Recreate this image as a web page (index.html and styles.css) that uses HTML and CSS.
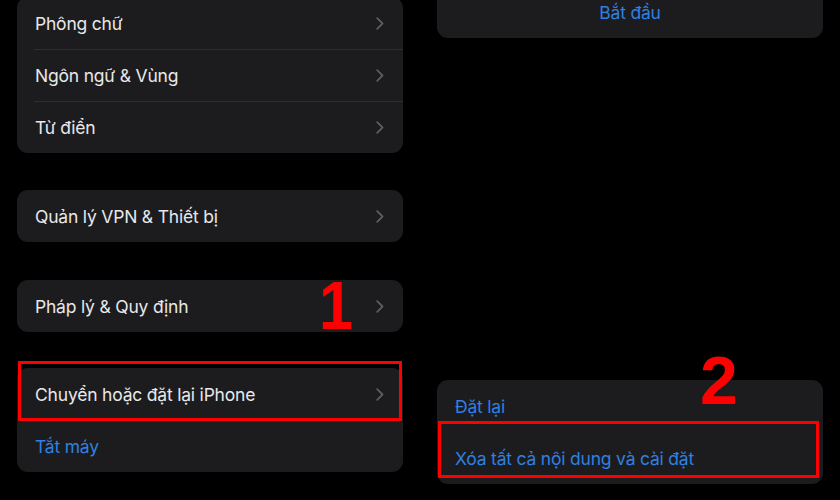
FILE: index.html
```html
<!DOCTYPE html>
<html lang="vi">
<head>
<meta charset="utf-8">
<link rel="stylesheet" href="styles.css">
</head>
<body>
<div class="page">
  <div class="col col-left">
    <div class="card card-top-left">
      <div class="row"><span class="label">Phông chữ</span><span class="chev"><svg viewBox="0 0 8 13" width="8" height="13"><path d="M1.2 1.2 L6.5 6.5 L1.2 11.8" fill="none" stroke="currentColor" stroke-width="1.8" stroke-linecap="round" stroke-linejoin="round"/></svg></span></div>
      <div class="row"><span class="label">Ngôn ngữ &amp; Vùng</span><span class="chev"><svg viewBox="0 0 8 13" width="8" height="13"><path d="M1.2 1.2 L6.5 6.5 L1.2 11.8" fill="none" stroke="currentColor" stroke-width="1.8" stroke-linecap="round" stroke-linejoin="round"/></svg></span></div>
      <div class="row"><span class="label">Từ điển</span><span class="chev"><svg viewBox="0 0 8 13" width="8" height="13"><path d="M1.2 1.2 L6.5 6.5 L1.2 11.8" fill="none" stroke="currentColor" stroke-width="1.8" stroke-linecap="round" stroke-linejoin="round"/></svg></span></div>
    </div>
    <div class="card card-vpn">
      <div class="row"><span class="label">Quản lý VPN &amp; Thiết bị</span><span class="chev"><svg viewBox="0 0 8 13" width="8" height="13"><path d="M1.2 1.2 L6.5 6.5 L1.2 11.8" fill="none" stroke="currentColor" stroke-width="1.8" stroke-linecap="round" stroke-linejoin="round"/></svg></span></div>
    </div>
    <div class="card card-legal">
      <div class="row"><span class="label">Pháp lý &amp; Quy định</span><span class="chev"><svg viewBox="0 0 8 13" width="8" height="13"><path d="M1.2 1.2 L6.5 6.5 L1.2 11.8" fill="none" stroke="currentColor" stroke-width="1.8" stroke-linecap="round" stroke-linejoin="round"/></svg></span></div>
      <span class="step step-1">1</span>
    </div>
    <div class="card card-reset">
      <div class="row marked mark-left"><span class="label">Chuyển hoặc đặt lại iPhone</span><span class="chev"><svg viewBox="0 0 8 13" width="8" height="13"><path d="M1.2 1.2 L6.5 6.5 L1.2 11.8" fill="none" stroke="currentColor" stroke-width="1.8" stroke-linecap="round" stroke-linejoin="round"/></svg></span></div>
      <div class="row"><span class="label blue">Tắt máy</span></div>
    </div>
  </div>
  <div class="col col-right">
    <div class="card card-top-right">
      <div class="row center"><span class="label blue">Bắt đầu</span></div>
    </div>
    <div class="card card-erase">
      <div class="row"><span class="label blue">Đặt lại</span></div>
      <div class="row marked mark-right"><span class="label blue">Xóa tất cả nội dung và cài đặt</span></div>
      <span class="step step-2">2</span>
    </div>
  </div>
</div>
</body>
</html>
```
FILE: styles.css
```css
* { box-sizing: border-box; }
html, body { margin: 0; padding: 0; background: #000; }
body {
  width: 840px;
  height: 500px;
  overflow: hidden;
  font-family: Inter, "Noto Sans", "Liberation Sans", sans-serif;
  color: #e8e8ea;
}
.page {
  display: flex;
  gap: 34px;
  padding: 0 17px;
}
.col {
  width: 386px;
  display: flex;
  flex-direction: column;
}
.card {
  position: relative;
  background: #1c1c1e;
  border-radius: 11px;
}
.row {
  position: relative;
  height: 52px;
  display: flex;
  align-items: center;
  justify-content: space-between;
  padding: 0 18px;
  font-size: 17.5px;
  letter-spacing: -0.2px;
}
.row + .row::before {
  content: "";
  position: absolute;
  top: 0;
  left: 17px;
  right: 0;
  height: 1px;
  background: #2e2e31;
}
.row.center { justify-content: center; }
.blue { color: #2f80e2; }
.chev {
  display: flex;
  color: #5c5c60;
  margin-right: 1px;
  margin-top: 1px;
}
.card-top-left { margin-top: -3px; }
.card-vpn { margin-top: 37px; }
.card-legal { margin-top: 38px; }
.card-reset { margin-top: 36px; }
.card-top-right { margin-top: -14px; }
.card-erase { margin-top: 342px; }
.marked::after {
  content: "";
  position: absolute;
  border: 3.5px solid #f00;
  z-index: 2;
}
.marked + .row::before, .row + .marked::before { display: none; }
.mark-left::after { top: -7px; bottom: -1px; left: 1px; right: 1px; }
.mark-right::after { top: -11px; bottom: 6px; left: 1px; right: 4px; }
.step {
  position: absolute;
  color: #f00;
  font-family: "Liberation Sans", Arial, sans-serif;
  font-weight: 700;
  font-size: 68px;
  line-height: 1;
  z-index: 3;
}
.step-1 { left: 300px; top: -9px; transform: scaleX(0.9); }
.step-2 { left: 263px; top: -34px; }
```
